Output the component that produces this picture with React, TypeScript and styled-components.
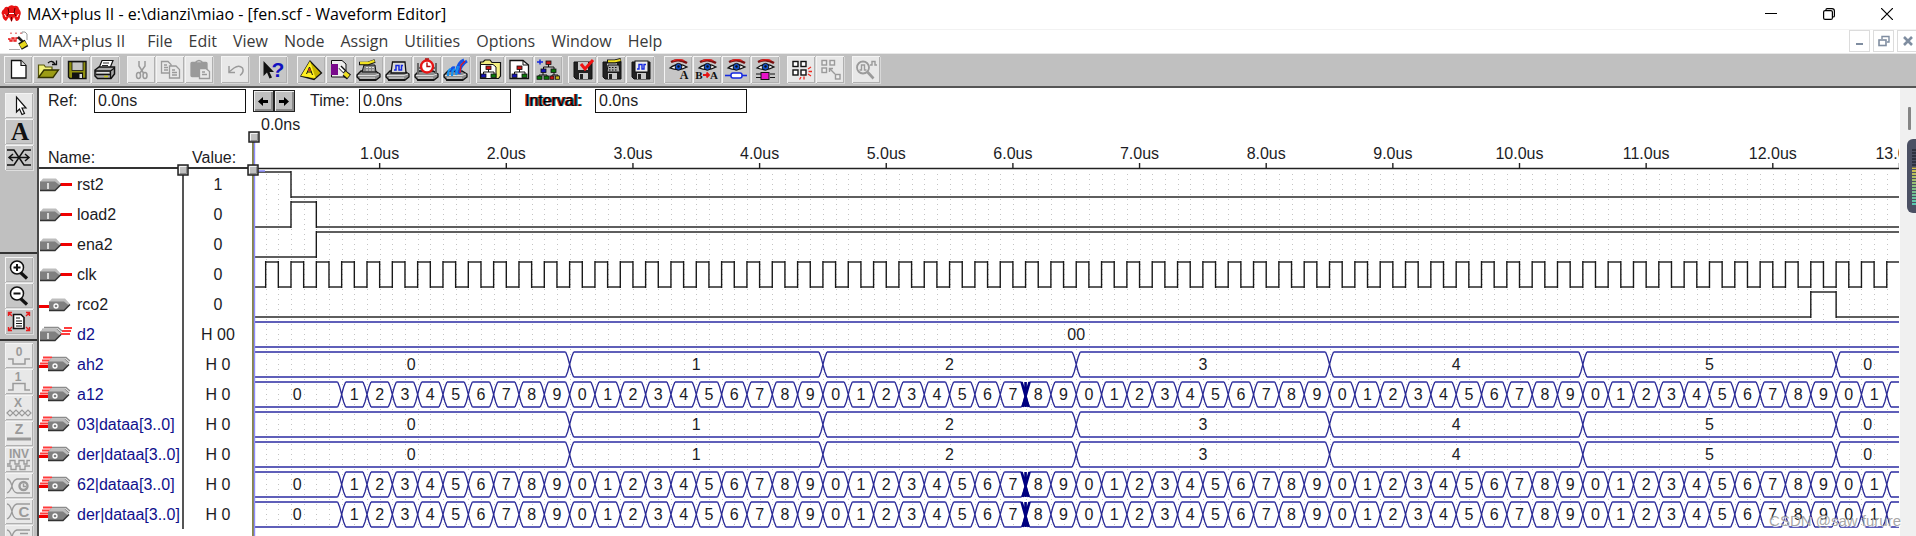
import React from "react";
import styled, { createGlobalStyle } from "styled-components";

/* ---------- page ---------- */

const GlobalStyle = createGlobalStyle`
  *, *::before, *::after { box-sizing: border-box; }
  body { margin: 0; background: #fff; }
  button, input { font: inherit; color: inherit; margin: 0; padding: 0; }
`;

const sans = `"Liberation Sans", Arial, sans-serif`;
const ui = `"Open Sans", "Noto Sans", sans-serif`;

const Window = styled.div`
  position: relative;
  display: flex;
  flex-direction: column;
  height: 100vh;
  overflow: hidden;
  background: #fff;
  color: #1c1c24;
  font-family: ${sans};
  font-size: 16px;
  line-height: 20px;
`;

/* ---------- title bar ---------- */

const TitleBar = styled.header`
  display: flex;
  align-items: center;
  flex: none;
  height: 29px;
  padding: 0 0 1px 1px;
  gap: 5px;
  font-family: ${ui};
  color: #000;
`;

const Title = styled.h1`
  flex: 1;
  margin: 0;
  font-size: 16px;
  font-weight: 400;
  line-height: 20px;
  white-space: nowrap;
`;

const CaptionButtons = styled.div`
  display: flex;
`;

const CaptionButton = styled.button`
  display: flex;
  align-items: center;
  justify-content: center;
  width: 58px;
  height: 28px;
  border: 0;
  background: none;
`;

/* ---------- menu bar ---------- */

const MenuBar = styled.nav`
  display: flex;
  align-items: center;
  flex: none;
  height: 25px;
  padding: 0 0 2px 8px;
  overflow: hidden;
  border-top: 1px solid #f2f2f2;
  border-bottom: 1px solid #e8e8e8;
`;

const MenuItem = styled.button<{ $app?: boolean }>`
  flex: none;
  padding: ${(p) => (p.$app ? "0 14px 0 9px" : "0 8px")};
  border: 0;
  background: none;
  font-family: ${ui};
  font-size: 16px;
  line-height: 20px;
  color: #3a3a3a;
  white-space: nowrap;
`;

const ChildButtons = styled.div`
  display: flex;
  gap: 3px;
  margin: 0 -2px 0 auto;
`;

const ChildButton = styled.button`
  display: flex;
  align-items: center;
  justify-content: center;
  width: 21px;
  height: 22px;
  border: 1px solid #dcdcdc;
  background: #fff;
`;

/* ---------- tool bars ---------- */

const ToolBar = styled.div`
  display: flex;
  flex: none;
  height: 34px;
  padding: 2px 4px 0;
  background: #c0c0c0;
  border-bottom: 2px solid #555;
`;

const ToolGroup = styled.div<{ $gap?: number }>`
  display: flex;
  flex: none;
  gap: 1px;
  margin-right: ${(p) => p.$gap ?? 0}px;
`;

const ToolButton = styled.button<{ $small?: boolean; $lit?: boolean }>`
  display: block;
  flex: none;
  width: 28px;
  height: ${(p) => (p.$small ? 25 : 27)}px;
  border: 0;
  background: ${(p) => (p.$lit ? "#e8e8e8" : "#c6c6c6")};
  box-shadow: inset 1px 1px 0 #f4f4f4, inset -1px -1px 0 #b0b0b0,
    1px 1px 0 ${(p) => (p.$lit ? "#d8d8d8" : "#dedede")};

  svg { display: block; }
`;

const Body = styled.div`
  display: flex;
  flex: 1;
  min-height: 0;
`;

const SideBar = styled.aside`
  display: flex;
  flex-direction: column;
  flex: none;
  width: 39px;
  overflow: hidden;
  background: #c0c0c0;
  border-right: 2px solid #484848;
`;

const SideGroup = styled.div<{ $height?: number; $top: number }>`
  display: flex;
  flex-direction: column;
  flex: none;
  gap: 1px;
  min-height: ${(p) => p.$height ?? 0}px;
  padding: ${(p) => p.$top}px 0 0 5px;

  & + & { border-top: 2px solid #333; }
`;

/* ---------- editor ---------- */

const Editor = styled.main`
  display: flex;
  flex-direction: column;
  flex: 1;
  min-width: 0;
`;

const FieldBar = styled.form`
  display: flex;
  align-items: center;
  flex: none;
  height: 26px;
  padding-left: 9px;
`;

const FieldLabel = styled.label<{ $width: number; $fringe?: boolean }>`
  flex: none;
  width: ${(p) => p.$width}px;
  color: ${(p) => (p.$fringe ? "#000" : "inherit")};
  text-shadow: ${(p) => (p.$fringe ? "-1px 0 0 #c01010, 1px 0 0 #007878" : "none")};
`;

const Field = styled.input`
  flex: none;
  width: 152px;
  height: 24px;
  padding: 0 3px;
  border: 1px solid #111;
  border-radius: 0;
  background: #fff;
`;

const StepButtons = styled.div`
  display: flex;
  margin: 0 15px 0 7px;
`;

const StepButton = styled.button`
  display: flex;
  align-items: center;
  justify-content: center;
  width: 21px;
  height: 22px;
  border: 1px solid #222;
  background: #c0c0c0;
  box-shadow: inset 1px 1px 0 #eee, inset -2px -2px 0 #8a8a8a;
`;

const Gap = styled.span`
  flex: none;
  width: 14px;
`;

const Sheet = styled.div`
  display: flex;
  flex: 1;
  min-height: 0;
`;

const SignalTable = styled.table`
  flex: none;
  align-self: flex-start;
  width: 215px;
  table-layout: fixed;
  border-collapse: separate;
  border-spacing: 0;

  th {
    height: 55px;
    padding: 0 0 0 9px;
    border-bottom: 2px solid #333;
    font-weight: 400;
    line-height: 18px;
    text-align: left;
    vertical-align: bottom;
  }

  th + th { padding-left: 8px; }
`;

const NameCell = styled.td<{ $bus?: boolean }>`
  height: 30px;
  padding: 2px 0 0;
  border-right: 2px solid #555;
  color: ${(p) => (p.$bus ? "#10108c" : "#1c1c24")};
  white-space: nowrap;
`;

const NameRow = styled.div`
  display: flex;
  align-items: center;
  gap: 4px;

  svg { flex: none; margin: -2px 0 0; }
`;

const ValueCell = styled.td`
  padding: 2px 2px 0 0;
  text-align: center;
`;

const Waves = styled.svg`
  display: block;
  position: relative;
  flex: 1;
  min-width: 0;
  height: 100%;
  margin-left: -78px;
  pointer-events: none;
`;

/* ---------- right edge ---------- */

const Edge = styled.div`
  position: relative;
  flex: none;
  width: 16px;
  margin-left: 1px;
  background: #f0f0f0;
`;

const Thumb = styled.div`
  position: absolute;
  top: 19px;
  right: 5px;
  width: 3px;
  height: 23px;
  border-radius: 1px;
  background: #858585;
`;

const Meter = styled.div`
  position: absolute;
  top: 51px;
  right: 0;
  width: 9px;
  height: 74px;
  padding: 9px 0 0 5px;
  border-radius: 6px 0 0 6px;
  background: #4b5063;
`;

const MeterBars = styled.div`
  height: 58px;
  background: repeating-linear-gradient(#4b5063 0 1px, transparent 1px 3px),
    linear-gradient(#2e3240 0 19px, #d2be4a 20px, #7cc08a 42px, #55c8b4 58px);
`;

const Watermark = styled.div`
  position: absolute;
  right: 15px;
  bottom: 5px;
  font-size: 15px;
  line-height: 20px;
  color: rgba(150, 150, 150, 0.85);
  text-shadow: 1px 1px 0 rgba(255, 255, 255, 0.8);
`;

/* ---------- tool icons, drawn in a 28 x 27 box ---------- */

const K = "#111";
const G = "#9a9a9a";

const Machine = () => (
  <>
    <path d="M2 19 L6 15 H20 L25 18 V21 L21 24 H5 L2 21Z" fill="#8c8c8c" stroke={K} strokeWidth="1.3" />
    <path d="M3 19.5 H20 L24 18 M5 22 H20" stroke="#dcdcdc" fill="none" />
    <path d="M4 24 H21" stroke={K} strokeWidth="1.6" />
  </>
);

const Tree = ({ x = 0, y = 0 }: { x?: number; y?: number }) => (
  <g transform={`translate(${x} ${y})`}>
    <path d="M6.5 3 V6 M1.5 9 V6 H12 V9" stroke={K} fill="none" />
    <rect x="4" y="0" width="5" height="3.5" fill="#c81414" stroke={K} strokeWidth=".8" />
    <rect x="-1" y="8" width="5" height="3.5" fill="#1414b4" stroke={K} strokeWidth=".8" />
    <rect x="9" y="8" width="5" height="3.5" fill="#0a780a" stroke={K} strokeWidth=".8" />
  </g>
);

const Disk = () => (
  <>
    <path d="M6 6 H24 V23 H8 L6 21Z" fill="#222" stroke={K} />
    <rect x="10" y="6" width="10" height="8" fill="#c8c8c8" />
    <rect x="11" y="17" width="9" height="6" fill="#c8c8c8" />
    <rect x="12" y="18" width="3" height="5" fill="#222" />
  </>
);

const Eye = () => (
  <>
    <path d="M7 6 Q15 2 23 7" stroke="#7a1010" strokeWidth="2.4" fill="none" />
    <path d="M9 5 Q15 2.5 20 4.5" stroke="#e62020" strokeWidth="1.2" fill="none" />
    <path d="M6 12 Q14 5.5 23 11 Q15 15.5 6 12Z" fill="#fff" stroke={K} strokeWidth="1.3" />
    <circle cx="14.5" cy="10.8" r="3.4" fill="#1450c8" stroke={K} />
    <circle cx="14.5" cy="10.5" r="1.2" fill={K} />
  </>
);

const Letter = ({ x, y, size, fill = K, family = "Liberation Serif", children }: {
  x: number; y: number; size: number; fill?: string; family?: string; children: string;
}) => (
  <text x={x} y={y} fontSize={size} fill={fill} fontWeight="700" fontFamily={`"${family}", serif`} textAnchor="middle">
    {children}
  </text>
);

const icons: Record<string, React.ReactNode> = {
  New: (
    <>
      <path d="M7.500 4.500 H17 L22 9.500 V22 H7.500Z" fill="#fff" stroke={K} strokeWidth="1.3" />
      <path d="M17 4.500 V9.500 H22" fill="#ddd" stroke={K} strokeWidth="1.200" />
    </>
  ),
  Open: (
    <>
      <path d="M5.500 21 V9 H11 L12.500 11 H19 V14" fill="#f0f07a" stroke="#55550a" strokeWidth="1.200" />
      <path d="M5.500 21.500 L11 14 H25.500 L20 21.500Z" fill="#9c9c14" stroke="#333300" strokeWidth="1.300" />
      <path d="M15 7 Q19 3.500 22 8 M19 8.500 H23.500 V4.500" stroke={K} fill="none" strokeWidth="1.300" />
    </>
  ),
  Save: (
    <>
      <path d="M6.500 5.500 H24 V22.500 H8 L6.500 21Z" fill="#8f8f10" stroke={K} strokeWidth="1.400" />
      <rect x="10" y="6" width="11" height="8.500" fill="#c4c4c4" stroke={K} strokeWidth=".8" />
      <rect x="10" y="16.500" width="11" height="6" fill={K} />
      <rect x="17.500" y="18" width="2.500" height="4" fill="#d8d8d8" />
    </>
  ),
  Print: (
    <>
      <path d="M8 12 L11 4.500 H22 L19 12Z" fill="#fff" stroke={K} strokeWidth="1.200" />
      <path d="M12 7 H18 M11 9.500 H17" stroke={K} strokeWidth=".9" />
      <path d="M4 14 L8 11 H23.500 V18 L20 22.500 H6.500 L4 20Z" fill="#a8a8a8" stroke={K} strokeWidth="1.500" />
      <path d="M4 15 H19.500 V22 M19.500 15 L23.500 12 M5 18.500 H19" stroke={K} fill="none" strokeWidth="1.300" />
      <path d="M6 16.700 H18" stroke="#eee" />
      <path d="M13 20.500 H17" stroke="#c8c81e" strokeWidth="1.500" />
    </>
  ),
  Cut: (
    <g stroke={G} fill="none" strokeWidth="1.500">
      <path d="M12 5 V10 L16.500 17 M18 5 V10 L13 17" />
      <ellipse cx="11.500" cy="19.500" rx="2" ry="3" />
      <ellipse cx="18" cy="19.500" rx="2" ry="3" />
    </g>
  ),
  Copy: (
    <g stroke={G} fill="#e8e8e8" strokeWidth="1.300">
      <path d="M5.500 5.500 H12 L15 8.500 V17 H5.500Z" />
      <path d="M13.500 10 H20 L23.500 13.500 V22 H13.500Z" />
      <path d="M8 9 H11 M8 11.500 H12 M8 14 H12 M16 14 H19 M16 16.500 H21 M16 19 H21" />
    </g>
  ),
  Paste: (
    <g stroke={G} strokeWidth="1.300">
      <rect x="6" y="6.500" width="16" height="14" rx="1" fill={G} />
      <path d="M10 7 Q14 2 18 7Z" fill="#ddd" />
      <path d="M14.500 12.500 H21 L24.500 15.500 V22.500 H14.500Z" fill="#e8e8e8" />
      <path d="M17 16 H20 M17 18.500 H22" />
    </g>
  ),
  Undo: (
    <g stroke={G} fill="none" strokeWidth="1.500">
      <path d="M8 16 L13 12 Q18 8.500 21.500 12 Q23.500 16 19 19.500" />
      <path d="M8 10 V16.500 H14" />
    </g>
  ),
  "Context help": (
    <>
      <path d="M4.500 5 V20 L8 16.500 L10.500 22.500 L13 21.500 L10.500 16 H15Z" fill={K} />
      <Letter x={19} y={21} size={21} fill="#1010c0" family="Liberation Sans">?</Letter>
    </>
  ),
  "Hierarchy display": (
    <>
      <path d="M13 5 L4 20 L17 23.500 L24.500 17Z" fill="#c8b400" stroke={K} strokeWidth="1.300" />
      <path d="M13 5 L4 20 L18.500 22Z" fill="#fff022" />
      <path d="M9.500 18 L12.500 11 L15.500 19 M10.500 16 H14.500" stroke={K} fill="none" />
      <circle cx="12.500" cy="14" r="1.200" fill="#e02020" />
    </>
  ),
  Floorplan: (
    <>
      <path d="M5.500 4.500 H16 L20 8 V21 H5.500Z" fill="#eee" stroke={K} />
      <rect x="5" y="8" width="7" height="11" fill="#7a0a8c" />
      <path d="M14 11 L19 16" stroke={K} strokeWidth="4" />
      <path d="M13.500 11 L18 15.500" stroke="#fff" strokeWidth="2" />
      <path d="M18.500 17.500 L23 21" stroke={K} strokeWidth="6.500" />
      <path d="M18.500 17 L22.500 20.500" stroke="#f0e020" strokeWidth="4" />
    </>
  ),
  Compiler: (
    <>
      <Machine />
      <path d="M7 16 L9 9 H20 L21 16Z" fill="#888" stroke={K} />
      <path d="M11 11.500 H19 M11 14 H19" stroke="#ddd" strokeDasharray="2 1" />
      <path d="M4 7.500 H13 L20 5" stroke={K} strokeWidth="3.600" fill="none" />
      <path d="M5 7 H13 L19.500 4.800" stroke="#f0e020" strokeWidth="2.300" fill="none" />
    </>
  ),
  Simulator: (
    <>
      <Machine />
      <path d="M7 17 L8.500 6 H21 L22 17Z" fill="#d8d8d8" stroke={K} strokeWidth="1.300" />
      <path d="M10 14 H12 V9.500 H15 V14 H17.500 V9.500 H19" stroke="#1428e0" strokeWidth="1.500" fill="none" />
    </>
  ),
  "Timing analyzer": (
    <>
      <Machine />
      <path d="M5 7 V18 M23 7 V18 M5 12 H23" stroke="#666" strokeWidth="2" />
      <circle cx="14" cy="10.500" r="6" fill="#fff" stroke="#e61414" strokeWidth="2.400" />
      <path d="M14 6.500 V10.500 H17.500 M12 3 H16" stroke="#b40a0a" fill="none" strokeWidth="1.400" />
    </>
  ),
  Programmer: (
    <>
      <Machine />
      <path d="M14 17 Q16 6 22 4 M17 18 Q18 9 25 5 M10 16 Q9 11 13 12" stroke="#1450e6" strokeWidth="3" fill="none" />
      <path d="M6 20 Q6 13 9 13 M10 20 Q10 14 13 13 M14 19 L16 10" stroke="#1490f0" strokeWidth="2.200" fill="none" />
      <path d="M18 17 L19 9 L23 5" stroke="#e61414" strokeWidth="1.200" fill="none" />
    </>
  ),
  "Project name": (
    <>
      <path d="M4.500 22.500 V6 H7 L9 4 H14 L16 6.500 H24.500 V20 L22.500 22.500Z" fill="#f2ee80" stroke={K} strokeWidth="1.200" />
      <path d="M4.500 8.500 H17 L20 11 V22.500 H4.500Z" fill="#fff" stroke={K} />
      <Tree x={6} y={10} />
    </>
  ),
  "Set project": (
    <>
      <path d="M5 4.500 H18 L23.500 9 V22.500 H5Z" fill="#fff" stroke={K} strokeWidth="1.300" />
      <path d="M18 4.500 V9 H23.500" fill="none" stroke={K} />
      <Tree x={8} y={10} />
    </>
  ),
  "Top of hierarchy": (
    <>
      <path d="M3 6 H9 M6 3.500 V8.500" stroke="#1428e0" strokeWidth="1.500" />
      <Tree x={8} y={5} />
      <path d="M9 16.500 V19 M5 21 V19 H13 V21 M20 16.500 V19 M18 21 V19 H24 V21" stroke={K} fill="none" />
      <rect x="3" y="20" width="5" height="3.300" fill="#0a780a" stroke={K} strokeWidth=".8" />
      <rect x="10" y="20" width="5" height="3.300" fill="#0a780a" stroke={K} strokeWidth=".8" />
      <rect x="16" y="20" width="4" height="3.300" fill="#c81414" stroke={K} strokeWidth=".8" />
      <rect x="21.500" y="20" width="4" height="3.300" fill="#c8b414" stroke={K} strokeWidth=".8" />
    </>
  ),
  "Save and check": (
    <>
      <Disk />
      <path d="M13 8 L17 13 L25 4" stroke="#f01414" strokeWidth="3" fill="none" />
    </>
  ),
  "Save and compile": (
    <>
      <Disk />
      <path d="M10 16 L11 9 H22 L23 16Z" fill="#aaa" stroke={K} />
      <path d="M12 11.500 H21 M12 14 H21" stroke={K} strokeDasharray="1.500 1.500" />
      <path d="M10 5.500 H18 L24 4" stroke={K} strokeWidth="4" fill="none" />
      <path d="M11 5.300 H18 L23.500 4" stroke="#f0e020" strokeWidth="2" fill="none" />
    </>
  ),
  "Save and simulate": (
    <>
      <Disk />
      <rect x="9" y="5" width="13" height="11" fill="#ececec" stroke={K} />
      <path d="M11 13 H13 V8.500 H16 V13 H18 V8.500 H20" stroke="#1428e0" strokeWidth="1.400" fill="none" />
    </>
  ),
  "Find text": (
    <>
      <Eye />
      <Letter x={20} y={23} size={12}>A</Letter>
    </>
  ),
  "Replace text": (
    <>
      <Eye />
      <Letter x={6} y={23} size={11}>B</Letter>
      <Letter x={21} y={23} size={11}>A</Letter>
      <path d="M10 19 H16 M13.500 16.500 L16 19 L13.500 21.500" stroke="#e61414" strokeWidth="1.800" fill="none" />
    </>
  ),
  "Find node": (
    <>
      <Eye />
      <path d="M3 19.500 H25" stroke="#1428e0" strokeWidth="1.600" />
      <rect x="9" y="17" width="11" height="5" rx="2" fill="#fff" stroke="#1428e0" strokeWidth="1.500" />
    </>
  ),
  "Find symbol": (
    <>
      <Eye />
      <path d="M5 18 H10 M5 21.500 H10 M19 18 H24 M19 21.500 H24" stroke={K} />
      <rect x="10" y="16.500" width="8" height="7" fill="#e614c8" stroke={K} />
    </>
  ),
  "Show group": (
    <>
      <g fill="#fff" stroke={K} strokeWidth="1.400">
        <rect x="6" y="5.500" width="5" height="5" />
        <rect x="14" y="5.500" width="5" height="5" />
        <rect x="6" y="14" width="5" height="5" />
        <rect x="14" y="14" width="5" height="5" />
      </g>
      <path d="M21 13 L24 11 M21.500 15.500 H25 M21 18 L24 20 M17 20.500 V23.500 M14 21 L12.500 23.500" stroke="#f02a1e" strokeWidth="1.300" />
    </>
  ),
  "Link nodes": (
    <g stroke={G} fill="#eee" strokeWidth="1.400">
      <rect x="6" y="4.500" width="4.500" height="4.500" />
      <rect x="14" y="4.500" width="4.500" height="4.500" />
      <rect x="6" y="12" width="4.500" height="4.500" />
      <rect x="19.500" y="18.500" width="4.500" height="4.500" />
      <path d="M13.500 12.500 L19 18 M13.500 16 V12.500 H17" fill="none" />
    </g>
  ),
  "Find wave": (
    <g stroke={G} fill="none" strokeWidth="1.800">
      <circle cx="11" cy="11.500" r="6" />
      <path d="M15.500 16 L21.500 22.500" strokeWidth="2.600" />
      <path d="M7.500 14 H9.500 V9 H12.500 V14 H14.500 M18 9 H20 V5.500 H23 V9 H25" strokeWidth="1.400" />
    </g>
  ),
  Select: (
    <path d="M11.500 4 V19 L14.500 16 L17 21.500 L19.500 20.500 L17 15 H21Z" fill="#fff" stroke={K} strokeWidth="1.200" />
  ),
  "Text tool": <Letter x={15} y={21} size={25}>A</Letter>,
  "Waveform tool": (
    <g stroke={K} fill="none" strokeWidth="1.500">
      <path d="M2 5 H9 L19 20 H26 M2 20 H9 L19 5 H26" />
      <path d="M4 12.500 H24 M8 9 L4 12.500 L8 16 M20 9 L24 12.500 L20 16" />
    </g>
  ),
  "Zoom in": (
    <>
      <path d="M15.500 15.500 L22 21.500" stroke={K} strokeWidth="3.200" />
      <circle cx="12" cy="10.500" r="6.500" fill="#fff" stroke={K} strokeWidth="1.500" />
      <path d="M8.500 10.500 H15.500 M12 7 V14" stroke={K} strokeWidth="2" />
    </>
  ),
  "Zoom out": (
    <>
      <path d="M15.500 15.500 L22 21.500" stroke={K} strokeWidth="3.200" />
      <circle cx="12" cy="10.500" r="6.500" fill="#fff" stroke={K} strokeWidth="1.500" />
      <path d="M8.500 10.500 H15.500" stroke={K} strokeWidth="2" />
    </>
  ),
  "Fit in window": (
    <>
      <path d="M8.500 5.500 H16 L19 8.500 V19.500 H8.500Z" fill="#fff" stroke={K} strokeWidth="1.600" />
      <path d="M11 9 H15 M11 12 H17 M11 14.500 H17 M11 17 H17" stroke={K} />
      <path d="M7 7 L3.500 3.500 M3.500 7 V3.500 H7 M21 7 L24.500 3.500 M21 3.500 H24.500 V7 M7 18 L3.500 21.500 M3.500 18 V21.500 H7 M21 18 L24.500 21.500 M24.500 18 V21.500 H21" stroke="#e61e1e" strokeWidth="1.400" fill="none" />
    </>
  ),
  "Overwrite 0": (
    <>
      <Letter x={14} y={13} size={12} fill={G} family="Liberation Sans">0</Letter>
      <path d="M3 16 H8 V21 H20 V16 H25" stroke={G} fill="none" strokeWidth="1.500" />
    </>
  ),
  "Overwrite 1": (
    <>
      <Letter x={13} y={12} size={12} fill={G} family="Liberation Sans">1</Letter>
      <path d="M3 21 H8 V14.500 H20 V21 H25" stroke={G} fill="none" strokeWidth="1.500" />
    </>
  ),
  "Overwrite X": (
    <>
      <Letter x={13} y={12} size={12} fill={G} family="Liberation Sans">X</Letter>
      <path d="M2 18 L5 15 L11 21 L17 15 L23 21 L26 18 L23 15 L17 21 L11 15 L5 21Z" stroke={G} fill="none" strokeWidth="1.200" />
    </>
  ),
  "Overwrite Z": (
    <>
      <Letter x={14} y={13} size={14} fill={G} family="Liberation Sans">Z</Letter>
      <path d="M2 18 H26" stroke={G} strokeWidth="3" />
    </>
  ),
  Invert: (
    <>
      <Letter x={14} y={11} size={12} fill={G} family="Liberation Sans">INV</Letter>
      <path d="M2 17 H5 V13.500 H10 V17 H14 V13.500 H19 V17 H22 V13.500 H25 M2 19 H6 V22.500 H11 V19 H15 V22.500 H20 V19 H25" stroke={G} fill="none" strokeWidth="1.300" />
    </>
  ),
  "Overwrite clock": (
    <>
      <path d="M2 6 Q5 6 7 13 Q8 19 12 20 M2 20 Q5 19 7 13 Q8 7 12 6 H24 M12 20 H25" stroke={G} fill="none" strokeWidth="1.300" />
      <circle cx="18.500" cy="13" r="4" fill="none" stroke={G} strokeWidth="2.400" />
      <path d="M18.500 10.500 V13.500 H21" stroke={G} strokeWidth="1.400" fill="none" />
    </>
  ),
  "Overwrite count": (
    <>
      <path d="M2 5 Q5 5 7 12.500 Q8 19 12 20 M2 20 Q5 19 7 12.500 Q8 6 12 5 H25 M12 20 H25" stroke={G} fill="none" strokeWidth="1.300" />
      <Letter x={19} y={18} size={15} fill={G} family="Liberation Sans">C</Letter>
    </>
  ),
  "Overwrite group": (
    <path d="M2 5 Q5 5 7 12.500 Q8 19 12 20 M2 20 Q5 19 7 12.500 Q8 6 12 5 H25 M15 8.500 H23" stroke={G} fill="none" strokeWidth="1.300" />
  ),
};

const Tool = ({ name, small, off, lit }: { name: string; small?: boolean; off?: boolean; lit?: boolean }) => (
  <ToolButton type="button" aria-label={name} title={name} disabled={off} $small={small} $lit={off || lit}>
    <svg width="28" height={small ? 25 : 27}>{icons[name]}</svg>
  </ToolButton>
);

type Group = { gap?: number; off?: boolean; names: string[] };

const toolGroups: Group[] = [
  { gap: 8, names: ["New", "Open", "Save", "Print"] },
  { gap: 8, off: true, names: ["Cut", "Copy", "Paste"] },
  { gap: 10, off: true, names: ["Undo"] },
  { gap: 10, names: ["Context help"] },
  { gap: 6, names: ["Hierarchy display", "Floorplan", "Compiler", "Simulator", "Timing analyzer", "Programmer"] },
  { gap: 6, names: ["Project name", "Set project", "Top of hierarchy"] },
  { gap: 10, names: ["Save and check", "Save and compile", "Save and simulate"] },
  { gap: 8, names: ["Find text", "Replace text", "Find node", "Find symbol"] },
  { gap: 8, names: ["Show group", "Link nodes"] },
  { off: true, names: ["Find wave"] },
];

/* ---------- pins ---------- */

type PinKind = "in" | "out" | "busIn" | "busOut";

const Pin = ({ kind }: { kind: PinKind }) => {
  const out = kind === "out" || kind === "busOut";
  const bus = kind === "busIn" || kind === "busOut";
  const left = kind === "out" ? 10 : kind === "busOut" ? 9 : 1;
  const tip = out ? left + 21 : 22;
  return (
    <svg width="34" height="18">
      {bus && (
        <path
          d={out ? "M4 2.500 H13 M3 5.500 H12 M1 8.500 H11" : "M25 3 H33 M23 6 H32 M21 9 H31"}
          stroke="#ff3c3c"
          strokeWidth="2"
        />
      )}
      <path d={out ? "M0 11.500 H10" : "M21 9.500 H33"} stroke="#f00000" strokeWidth={bus && !out ? 0 : 3} />
      {bus && (
        <path
          d={`M${left + 4} 2.500 H${tip - 3} L${tip + 1} 6 M${left + 2} 4.500 H${tip - 4} L${tip} 8`}
          stroke="#8c8c8c"
          strokeWidth="1.500"
          fill="none"
        />
      )}
      <path d={`M${left} 7 L${left + 3} 3.500 H${tip - 5} L${tip} 9 L${tip - 6} 15 V7Z`} fill="#bdbdbd" />
      <path d={`M${left} 6.500 H${tip - 6} L${tip - 1} 10.500 L${tip - 6} 15.500 H${left}Z`} fill="#808080" />
      <path d={`M${left} 15.500 H${tip - 6} L${tip} 9.500`} stroke="#333" strokeWidth="1.400" fill="none" />
      {out ? (
        <circle cx={left + 7} cy="11" r="2" fill="none" stroke="#fff" strokeWidth="1.300" />
      ) : (
        <path d="M9 8 V14" stroke="#fff" strokeWidth="1.400" />
      )}
    </svg>
  );
};

/* ---------- waveform data ---------- */

const END = 13;

type Signal = {
  name: string;
  value: string;
  pin: PinKind;
  start?: 0 | 1;
  edges?: number[];
  bus?: { at: number; text: string }[];
  glitch?: number;
};

const clockEdges = Array.from({ length: 129 }, (_, i) => (i + 1) / 10);

const tens = [
  { at: 0, text: "0" },
  ...[1, 2, 3, 4, 5, 0].map((n, i) => ({ at: 2.5 + 2 * i, text: String(n) })),
];

const units = [
  { at: 0, text: "0" },
  ...Array.from({ length: 62 }, (_, i) => ({ at: 0.7 + 0.2 * i, text: i < 61 ? String((i + 1) % 10) : "" })),
];

const signals: Signal[] = [
  { name: "rst2", value: "1", pin: "in", start: 1, edges: [0.3] },
  { name: "load2", value: "0", pin: "in", start: 0, edges: [0.3, 0.5] },
  { name: "ena2", value: "0", pin: "in", start: 0, edges: [0.5] },
  { name: "clk", value: "0", pin: "in", start: 0, edges: clockEdges },
  { name: "rco2", value: "0", pin: "out", start: 0, edges: [12.3, 12.5] },
  { name: "d2", value: "H 00", pin: "busIn", bus: [{ at: 0, text: "00" }] },
  { name: "ah2", value: "H 0", pin: "busOut", bus: tens },
  { name: "a12", value: "H 0", pin: "busOut", bus: units, glitch: 6.1 },
  { name: "03|dataa[3..0]", value: "H 0", pin: "busOut", bus: tens },
  { name: "der|dataa[3..0]", value: "H 0", pin: "busOut", bus: tens },
  { name: "62|dataa[3..0]", value: "H 0", pin: "busOut", bus: units, glitch: 6.1 },
  { name: "der|dataa[3..0]", value: "H 0", pin: "busOut", bus: units, glitch: 6.1 },
];

/* ---------- waveform drawing ---------- */

const PER_US = 126.65;
const X0 = 77;
const RULE = 54;
const HIGH = 58;
const SWING = 25;
const px = (us: number) => X0 + us * PER_US;

const BitWave = ({ y, start, edges }: { y: number; start: number; edges: number[] }) => {
  const level = (i: number) => ((start + i) % 2 ? y : y + SWING);
  const stops = [0, ...edges, END];
  return (
    <>
      <path
        d={stops.slice(0, -1).map((t, i) => `M${px(t)} ${level(i)} H${px(stops[i + 1])}`).join("")}
        stroke="#5e5e5e"
        strokeWidth="2"
      />
      <path d={edges.map((t) => `M${px(t)} ${y - 1} V${y + SWING + 1}`).join("")} stroke="#1a1a1a" strokeWidth="1.400" />
    </>
  );
};

const BusWave = ({ y, spans, glitch }: { y: number; spans: { at: number; text: string }[]; glitch?: number }) => {
  const low = y + SWING;
  const ends = [...spans.slice(1).map((s) => s.at), END];
  return (
    <>
      {spans.map((s, i) => {
        const a = i ? px(s.at) + 4 : px(0);
        const b = i < spans.length - 1 ? px(ends[i]) - 4 : px(END);
        const x = px(s.at);
        return (
          <g key={i}>
            <path d={`M${a} ${y} H${b} M${a} ${low} H${b}`} stroke="#5f5fb9" strokeWidth="2" />
            {i > 0 && (
              <path
                d={`M${x - 4} ${y} L${x - 2} ${y + 5} L${x + 2} ${low - 5} L${x + 4} ${low} M${x + 4} ${y} L${x + 2} ${y + 5} L${x - 2} ${low - 5} L${x - 4} ${low}`}
                stroke="#2a2a96"
                strokeWidth="1.300"
                fill="none"
              />
            )}
            <text x={(x + px(ends[i])) / 2} y={y + 18} textAnchor="middle">{s.text}</text>
          </g>
        );
      })}
      {glitch !== undefined && (
        <path
          d={`M${px(glitch) - 4} ${y} L${px(glitch) + 3} ${low} M${px(glitch) + 4} ${y} L${px(glitch) - 3} ${low} M${px(glitch)} ${y} V${low}`}
          stroke="#000080"
          strokeWidth="2.600"
        />
      )}
    </>
  );
};

const Handle = ({ x, y }: { x: number; y: number }) => (
  <g>
    <rect x={x - 5} y={y - 5} width="10" height="10" fill="#c0c0c0" stroke="#222" strokeWidth="1.500" />
    <path d={`M${x - 3.500} ${y + 3} V${y - 3.500} H${x + 3}`} stroke="#f4f4f4" fill="none" />
    <path d={`M${x + 3.500} ${y - 3} V${y + 3.500} H${x - 3}`} stroke="#8a8a8a" fill="none" />
  </g>
);

const Waveforms = () => (
  <Waves fontFamily={sans} fontSize="16" fill="#1c1c24" aria-label="Waveforms">
    <path
      d={Array.from({ length: 129 }, (_, i) => `M${Math.round(px((i + 1) / 10)) + 0.5} 60 V415`).join("")}
      stroke="#c4c4c4"
      strokeWidth="1"
      strokeDasharray="1 4"
    />
    <path d={`M${X0} ${RULE + 0.5} H${px(END)}`} stroke="#222" strokeWidth="1.600" />
    {Array.from({ length: END }, (_, i) => (
      <g key={i}>
        <path d={`M${px(i + 1)} 49 V54`} stroke="#222" strokeWidth="1.400" />
        <text x={px(i + 1)} y="45" textAnchor="middle">{`${i + 1}.0us`}</text>
      </g>
    ))}
    <text x={X0 + 8} y="16">0.0ns</text>
    {signals.map((s, i) =>
      s.bus ? (
        <BusWave key={i} y={HIGH + 30 * i} spans={s.bus} glitch={s.glitch} />
      ) : (
        <BitWave key={i} y={HIGH + 30 * i} start={s.start ?? 0} edges={s.edges ?? []} />
      )
    )}
    <path d={`M${X0} 28 V430`} stroke="#86864a" strokeWidth="2" />
    <path d={`M${X0 + 1.5} 28 V430`} stroke="#8c8cff" strokeWidth="1.400" />
    <path d={`M${X0 + 4} 57 H${X0 + 12}`} stroke="#8c8cff" strokeWidth="1.500" />
    <Handle x={X0 + 1} y={23} />
    <Handle x={X0} y={56} />
    <Handle x={X0 - 70} y={56} />
  </Waves>
);

/* ---------- app ---------- */

const Logo = () => (
  <svg width="21" height="20">
    <path d="M3 5 Q4 2 7 3 Q10 0 13 2 Q17 1 18 5 Q21 8 19 12 Q19 17 15 17 L13 13 L10.500 18 L8 13 L5 17 Q1 15 1.500 11 Q-1 8 3 5Z" fill="#ea1414" />
    <path d="M7 4 L8 9 L6 12 M14 4 L13 9 L15 12 M10.500 13 V17" stroke="#5a0000" fill="none" />
    <path d="M8 9.500 H13 M3.500 10 L5 13 M17.500 10 L16 13" stroke="#fff" fill="none" />
  </svg>
);

const FileIcon = () => (
  <svg width="21" height="20">
    <path d="M3 1.500 V3 M8 1.500 V3 M13 1.500 V3" stroke="#e03c3c" strokeWidth="1.200" />
    <path d="M0 8 H2 V10 H4 V7 H6 V10 H8 V7 H10" stroke="#e61414" fill="none" strokeWidth="1.300" />
    <path d="M14 3 V1 H17 L19 3 V9" stroke="#999" fill="none" />
    <path d="M10 6 L15 11" stroke="#222" strokeWidth="2.500" />
    <path d="M12 15.500 L18.500 12" stroke="#111" strokeWidth="7.500" />
    <path d="M12.500 15.500 L18 12" stroke="#e6d81e" strokeWidth="5" />
    <path d="M1 18.500 H12" stroke="#aaa" />
  </svg>
);

const menu = ["MAX+plus II", "File", "Edit", "View", "Node", "Assign", "Utilities", "Options", "Window", "Help"];

export default function App() {
  return (
    <Window>
      <GlobalStyle />
      <TitleBar>
        <Logo />
        <Title>MAX+plus II - e:\dianzi\miao - [fen.scf - Waveform Editor]</Title>
        <CaptionButtons>
          <CaptionButton type="button" aria-label="Minimize">
            <svg width="12" height="12"><path d="M0 5.500 H12" stroke="#000" /></svg>
          </CaptionButton>
          <CaptionButton type="button" aria-label="Restore">
            <svg width="12" height="12" fill="none" stroke="#000" strokeWidth="1.200">
              <rect x=".6" y="2.600" width="8.800" height="8.800" rx="1.500" />
              <path d="M3 2.500 V1.500 Q3 .6 4 .6 H9 Q11.400 .6 11.400 3 V8 Q11.400 9 10 9" />
            </svg>
          </CaptionButton>
          <CaptionButton type="button" aria-label="Close">
            <svg width="12" height="12"><path d="M0 0 L12 12 M12 0 L0 12" stroke="#000" strokeWidth="1.200" /></svg>
          </CaptionButton>
        </CaptionButtons>
      </TitleBar>
      <MenuBar>
        <FileIcon />
        {menu.map((m, i) => <MenuItem type="button" key={m} $app={i === 0}>{m}</MenuItem>)}
        <ChildButtons>
          <ChildButton type="button" aria-label="Minimize child window">
            <svg width="12" height="12"><path d="M2 9 H9" stroke="#7f8da0" strokeWidth="2" /></svg>
          </ChildButton>
          <ChildButton type="button" aria-label="Restore child window">
            <svg width="12" height="12" fill="none" stroke="#7f8da0">
              <path d="M4 4 V1.500 H11 V7 H9" strokeWidth="1.400" />
              <rect x="1" y="5" width="7" height="5.500" strokeWidth="1.600" />
            </svg>
          </ChildButton>
          <ChildButton type="button" aria-label="Close child window">
            <svg width="12" height="12"><path d="M2 2 L10 10 M10 2 L2 10" stroke="#7f8da0" strokeWidth="2.600" /></svg>
          </ChildButton>
        </ChildButtons>
      </MenuBar>
      <ToolBar>
        {toolGroups.map((g, i) => (
          <ToolGroup key={i} $gap={g.gap}>
            {g.names.map((n) => (
              <Tool key={n} name={n} off={g.off || n === "Link nodes"} lit={n === "Show group"} />
            ))}
          </ToolGroup>
        ))}
      </ToolBar>
      <Body>
        <SideBar>
          <SideGroup $top={5} $height={164}>
            <Tool small name="Select" lit />
            <Tool small name="Text tool" />
            <Tool small name="Waveform tool" />
          </SideGroup>
          <SideGroup $top={3} $height={87}>
            <Tool small name="Zoom in" />
            <Tool small name="Zoom out" />
            <Tool small name="Fit in window" />
          </SideGroup>
          <SideGroup $top={2}>
            {["Overwrite 0", "Overwrite 1", "Overwrite X", "Overwrite Z", "Invert", "Overwrite clock", "Overwrite count", "Overwrite group"].map(
              (n) => <Tool small off key={n} name={n} />
            )}
          </SideGroup>
        </SideBar>
        <Editor>
          <FieldBar>
            <FieldLabel htmlFor="ref" $width={46}>Ref:</FieldLabel>
            <Field id="ref" defaultValue="0.0ns" />
            <StepButtons>
              <StepButton type="button" aria-label="Previous transition">
                <svg width="11" height="9"><path d="M0 4.500 L5 0 V3 H10 V6 H5 V9Z" fill="#000" /></svg>
              </StepButton>
              <StepButton type="button" aria-label="Next transition">
                <svg width="11" height="9"><path d="M10 4.500 L5 0 V3 H0 V6 H5 V9Z" fill="#000" /></svg>
              </StepButton>
            </StepButtons>
            <FieldLabel htmlFor="time" $width={49}>Time:</FieldLabel>
            <Field id="time" defaultValue="0.0ns" />
            <Gap />
            <FieldLabel htmlFor="interval" $width={70} $fringe>Interval:</FieldLabel>
            <Field id="interval" defaultValue="0.0ns" />
          </FieldBar>
          <Sheet>
            <SignalTable>
              <colgroup>
                <col style={{ width: "145px" }} />
                <col />
              </colgroup>
              <thead>
                <tr><th scope="col">Name:</th><th scope="col">Value:</th></tr>
              </thead>
              <tbody>
                {signals.map((s, i) => (
                  <tr key={i}>
                    <NameCell $bus={!!s.bus}>
                      <NameRow><Pin kind={s.pin} />{s.name}</NameRow>
                    </NameCell>
                    <ValueCell>{s.value}</ValueCell>
                  </tr>
                ))}
              </tbody>
            </SignalTable>
            <Waveforms />
          </Sheet>
        </Editor>
        <Edge>
          <Thumb />
          <Meter><MeterBars /></Meter>
        </Edge>
      </Body>
      <Watermark>CSDN @saw furure</Watermark>
    </Window>
  );
}
